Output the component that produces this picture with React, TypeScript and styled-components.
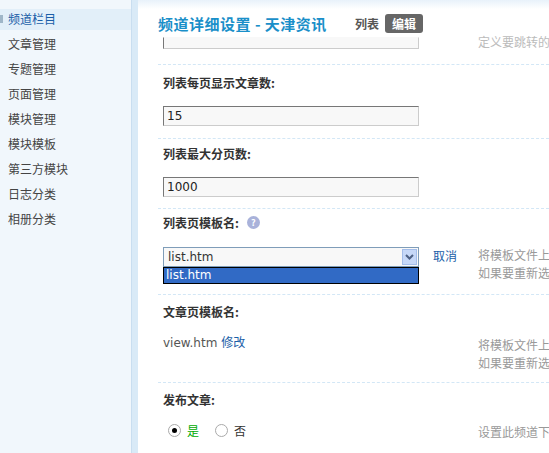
import React from "react";
import styled, { createGlobalStyle } from "styled-components";

const G = createGlobalStyle`
  html,body{margin:0;padding:0;background:#fff;overflow:hidden;}
  body{font-family:"Noto Sans CJK SC","DejaVu Sans",sans-serif;font-size:12px;color:#333;}
`;
const Page = styled.div`display:flex;width:549px;height:453px;overflow:hidden;`;
const Side = styled.div`width:131px;flex:none;background:#f1f7fc;padding-top:9px;`;
const Strip = styled.div`width:7px;flex:none;background:#d9eaf7;border-left:1px solid #c9def0;box-sizing:border-box;`;
const Item = styled.div<{ $active?: boolean }>`
  height:25px;line-height:20px;padding-left:8px;font-size:12px;position:relative;box-sizing:border-box;
  color:${p => (p.$active ? "#1a5ea8" : "#444")};
  background:${p => (p.$active ? "linear-gradient(#e2eff9,#e2eff9) 0 0/100% 21px no-repeat" : "transparent")};
`;
const Mark = styled.span`position:absolute;left:0;top:6px;width:3px;height:8px;background:#9fb6c8;`;
const Main = styled.div`flex:1;background:#fff;`;
const TopShade = styled.div`height:9px;background:linear-gradient(#e8f2fa,#fff);`;
const Header = styled.div`display:flex;align-items:center;height:28px;padding-left:20px;`;
const Title = styled.span`font-size:15px;font-weight:bold;color:#1a8fc9;letter-spacing:0.5px;`;
const Tab = styled.span<{ $on?: boolean }>`
  font-size:12px;font-weight:bold;margin-left:${p => (p.$on ? "6px" : "28px")};
  color:${p => (p.$on ? "#fff" : "#555")};background:${p => (p.$on ? "#666" : "none")};
  padding:${p => (p.$on ? "1px 7px" : "0")};border-radius:3px;
`;
const Body = styled.div`padding-left:20px;`;
const Sec = styled.div<{ $h: number; $last?: boolean }>`
  height:${p => p.$h}px;border-bottom:${p => (p.$last ? "none" : "1px dashed #d3e7f6")};position:relative;
  padding-left:5px;box-sizing:border-box;display:flex;flex-direction:column;align-items:flex-start;
`;
const Label = styled.div<{ $mt: number; $gap: number }>`
  margin-top:${p => p.$mt}px;margin-bottom:${p => p.$gap}px;height:20px;
  font-weight:bold;font-size:12px;color:#333;display:flex;align-items:center;gap:8px;
`;
const Input = styled.div<{ $cut?: boolean }>`
  width:256px;height:${p => (p.$cut ? "12px" : "20px")};box-sizing:border-box;background:#f8f8f8;
  border:1px solid;border-color:${p => (p.$cut ? "transparent" : "#777")} #ccc #ccc #777;
  font-family:"DejaVu Sans",sans-serif;font-size:12px;line-height:18px;padding-left:3px;color:#222;
`;
const Hint = styled.div<{ $top: number; $light?: boolean }>`
  position:absolute;left:320px;top:${p => p.$top}px;color:${p => (p.$light ? "#bbb" : "#999")};
  font-size:12px;line-height:18px;white-space:nowrap;
`;
const Help = styled.span`width:13px;height:13px;border-radius:50%;background:#a9b2da;color:#fff;font-size:9px;display:inline-flex;align-items:center;justify-content:center;font-weight:bold;`;
const SelRow = styled.div`display:flex;align-items:flex-start;`;
const SelBox = styled.div`width:256px;height:20px;box-sizing:border-box;border:1px solid #7f9db9;background:#f8f8f8;display:flex;align-items:center;justify-content:space-between;font-family:"DejaVu Sans",sans-serif;padding-left:4px;`;
const Arrow = styled.span`width:15px;height:16px;background:#c6d8f8;border:1px solid #a3bdea;margin-right:1px;display:flex;align-items:center;justify-content:center;box-sizing:border-box;`;
const Opt = styled.div`width:256px;height:17px;box-sizing:border-box;background:#316ac5;color:#fff;border:1px solid #000;font-family:"DejaVu Sans",sans-serif;line-height:15px;padding-left:2px;`;
const Link = styled.span<{ $ml?: number }>`color:#1a5ea8;margin-left:${p => p.$ml ?? 0}px;line-height:18px;`;
const Value = styled.div`height:20px;line-height:20px;font-family:"DejaVu Sans","Noto Sans CJK SC",sans-serif;color:#555;`;
const RadioRow = styled.div`height:20px;display:flex;align-items:center;gap:6px;padding-left:5px;`;
const Radio = styled.span<{ $on?: boolean; $ml?: number }>`
  width:11px;height:11px;border-radius:50%;border:1px solid #aaa;display:inline-block;background:#fff;position:relative;
  margin-left:${p => p.$ml ?? 0}px;
  &::after{content:"";display:${p => (p.$on ? "block" : "none")};position:absolute;left:3px;top:3px;width:5px;height:5px;border-radius:50%;background:#000;}
`;
const Yes = styled.span`color:#0a0;`;

export default function App() {
  const items = ["频道栏目", "文章管理", "专题管理", "页面管理", "模块管理", "模块模板", "第三方模块", "日志分类", "相册分类"];
  return (
    <Page>
      <G />
      <Side>
        {items.map((t, i) => (
          <Item key={t} $active={i === 0}>{i === 0 && <Mark />}{t}</Item>
        ))}
      </Side>
      <Strip />
      <Main>
        <TopShade />
        <Header>
          <Title>频道详细设置 - 天津资讯</Title>
          <Tab>列表</Tab>
          <Tab $on>编辑</Tab>
        </Header>
        <Body>
          <Sec $h={28}>
            <Input $cut />
            <Hint $top={-4} $light>定义要跳转的</Hint>
          </Sec>
          <Sec $h={74}>
            <Label $mt={7} $gap={14}>列表每页显示文章数:</Label>
            <Input>15</Input>
          </Sec>
          <Sec $h={70}>
            <Label $mt={4} $gap={14}>列表最大分页数:</Label>
            <Input>1000</Input>
          </Sec>
          <Sec $h={86}>
            <Label $mt={3} $gap={15}>列表页模板名: <Help>?</Help></Label>
            <SelRow>
              <div>
                <SelBox>list.htm<Arrow><svg width="9" height="6" viewBox="0 0 9 6"><path d="M1 1l3.5 3.5L8 1" stroke="#4d6185" strokeWidth="2" fill="none" /></svg></Arrow></SelBox>
                <Opt>list.htm</Opt>
              </div>
              <Link $ml={14}>取消</Link>
            </SelRow>
            <Hint $top={37}>将模板文件上<br />如果要重新选</Hint>
          </Sec>
          <Sec $h={88}>
            <Label $mt={6} $gap={12}>文章页模板名:</Label>
            <Value>view.htm <Link>修改</Link></Value>
            <Hint $top={41}>将模板文件上<br />如果要重新选</Hint>
          </Sec>
          <Sec $h={80} $last>
            <Label $mt={6} $gap={11}>发布文章:</Label>
            <RadioRow>
              <Radio $on /><Yes>是</Yes>
              <Radio $ml={10} /><span>否</span>
            </RadioRow>
            <Hint $top={40}>设置此频道下</Hint>
          </Sec>
        </Body>
      </Main>
    </Page>
  );
}
